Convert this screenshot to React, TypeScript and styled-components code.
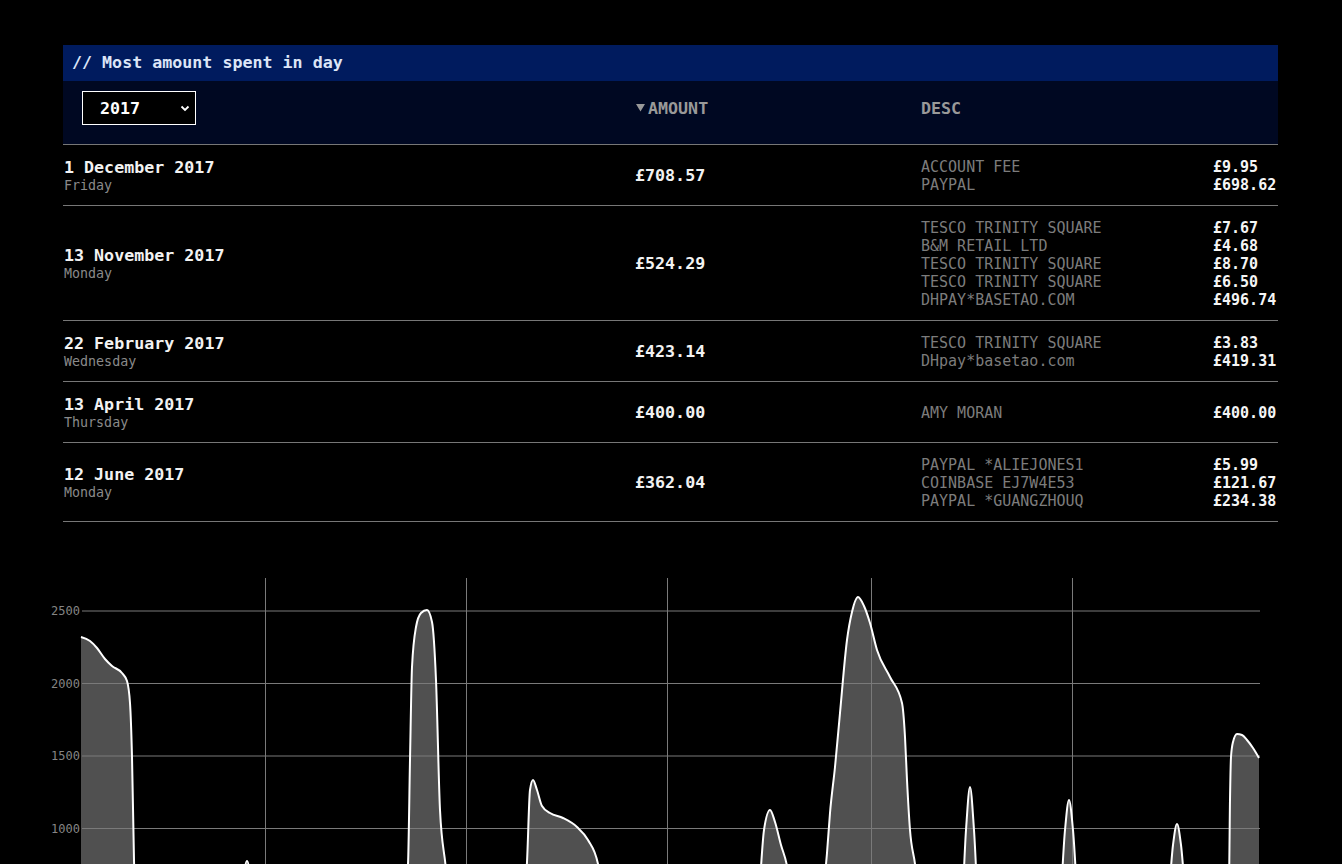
import React from "react";
import styled, { createGlobalStyle } from "styled-components";

const Global = createGlobalStyle`
  html, body { margin: 0; padding: 0; background: #000; }
  body { font-family: "DejaVu Sans Mono", "Liberation Mono", monospace; color: #fff; }
`;

const Page = styled.div`
  padding-top: 45px;
  display: flex;
  flex-direction: column;
`;

const Panel = styled.section`
  margin-left: 63px;
  width: 1215px;
  display: flex;
  flex-direction: column;
`;

const TitleBar = styled.div`
  height: 36px;
  background: #001b5e;
  color: #dce5f7;
  font-weight: bold;
  font-size: 16.67px;
  line-height: 36px;
  padding-left: 9px;
`;

const Grid = styled.div`
  display: grid;
  grid-template-columns: 571px 286px 1fr;
`;

const HeaderRow = styled(Grid)`
  background: #000822;
  padding: 10px 0 19px;
  border-bottom: 1px solid #777;
  align-items: center;
`;

const HeaderCell = styled.div<{ $pl?: number }>`
  padding-left: ${(p) => p.$pl ?? 1}px;
  color: #999;
  font-weight: bold;
  font-size: 16.67px;
  display: flex;
  align-items: center;
`;

const SelectWrap = styled.div`
  position: relative;
  width: 114px;
  height: 34px;
`;

const YearSelect = styled.select`
  appearance: none;
  -webkit-appearance: none;
  width: 114px;
  height: 34px;
  box-sizing: border-box;
  background: #000;
  color: #fff;
  border: 1px solid #fff;
  border-radius: 0;
  font-family: "DejaVu Sans Mono", monospace;
  font-weight: bold;
  font-size: 16.67px;
  padding: 0 0 0 17px;
  outline: none;
`;

const Chevron = styled.svg`
  position: absolute;
  right: 6px;
  top: 14px;
  pointer-events: none;
`;

const SortIcon = styled.svg`
  margin-right: 3px;
  margin-left: 1px;
`;

const Row = styled(Grid)`
  border-bottom: 1px solid #777;
  padding: 12px 0;
  align-items: center;
`;

const DateCell = styled.div`
  padding-left: 1px;
  display: flex;
  flex-direction: column;
`;

const DateText = styled.div`
  font-weight: bold;
  font-size: 16.67px;
  line-height: 21px;
  color: #f2f2f2;
`;

const DayText = styled.div`
  font-size: 13.33px;
  line-height: 15px;
  color: #8a8a8a;
`;

const AmountCell = styled.div`
  padding-left: 1px;
  font-weight: bold;
  font-size: 16.67px;
  color: #f2f2f2;
`;

const DescCell = styled.div`
  padding: 1px 2px 0 1px;
  margin-bottom: -1px;
  display: flex;
  flex-direction: column;
`;

const DescLine = styled.div`
  display: grid;
  grid-template-columns: 292px 1fr;
  font-size: 15px;
  line-height: 18px;
`;

const DescName = styled.span`
  color: #7c7c7c;
`;

const DescAmount = styled.span`
  color: #f5f5f5;
  font-weight: bold;
`;

const ChartBox = styled.div`
  margin-top: 48px;
  height: 294px;
  overflow: hidden;
`;

type Tx = [string, string];
type Day = { date: string; day: string; amount: string; items: Tx[] };

const data: Day[] = [
  { date: "1 December 2017", day: "Friday", amount: "£708.57", items: [["ACCOUNT FEE", "£9.95"], ["PAYPAL", "£698.62"]] },
  {
    date: "13 November 2017",
    day: "Monday",
    amount: "£524.29",
    items: [
      ["TESCO TRINITY SQUARE", "£7.67"],
      ["B&M RETAIL LTD", "£4.68"],
      ["TESCO TRINITY SQUARE", "£8.70"],
      ["TESCO TRINITY SQUARE", "£6.50"],
      ["DHPAY*BASETAO.COM", "£496.74"],
    ],
  },
  { date: "22 February 2017", day: "Wednesday", amount: "£423.14", items: [["TESCO TRINITY SQUARE", "£3.83"], ["DHpay*basetao.com", "£419.31"]] },
  { date: "13 April 2017", day: "Thursday", amount: "£400.00", items: [["AMY MORAN", "£400.00"]] },
  {
    date: "12 June 2017",
    day: "Monday",
    amount: "£362.04",
    items: [
      ["PAYPAL *ALIEJONES1", "£5.99"],
      ["COINBASE EJ7W4E53", "£121.67"],
      ["PAYPAL *GUANGZHOUQ", "£234.38"],
    ],
  },
];

const pts: [number, number][] = [
  [81, 637], [90, 641], [97, 648], [105, 659], [112, 666], [122, 673], [127, 681], [130, 703], [132, 757], [134, 860], [138, 950],
  [200, 950], [240, 900], [247, 861], [254, 900], [300, 955],
  [380, 955], [404, 900], [408, 864], [410, 760], [412, 667], [416, 627], [421, 613], [427, 610], [432, 622], [436, 680], [440, 810], [446, 870], [452, 950],
  [510, 955], [524, 900], [527, 862], [530, 790], [533, 780], [537, 790], [542, 806], [550, 813], [563, 818], [577, 827], [588, 840], [598, 864], [606, 920], [640, 955],
  [730, 955], [758, 900], [764, 830], [770, 810], [775, 822], [781, 845], [787, 866], [795, 930], [808, 950],
  [822, 900], [827, 853], [830, 813], [835, 767], [840, 713], [847, 640], [852, 612], [858, 597], [864, 606], [870, 623], [877, 650], [890, 677], [902, 703], [905, 737], [907, 780], [910, 830], [915, 864], [922, 930],
  [945, 955], [962, 900], [966, 830], [970, 787], [974, 830], [978, 900], [990, 955],
  [1040, 955], [1060, 900], [1065, 830], [1069, 800], [1073, 830], [1078, 900], [1095, 955],
  [1150, 955], [1168, 900], [1173, 845], [1177, 824], [1181, 845], [1186, 900], [1200, 955],
  [1222, 940], [1229, 880], [1230, 800], [1231, 757], [1233, 742], [1237, 734], [1242, 735], [1247, 740], [1253, 748], [1259, 758],
];

function monotonePath(p: [number, number][]): string {
  const n = p.length;
  const t: number[] = new Array(n).fill(0);
  const sign = (v: number) => (v < 0 ? -1 : 1);
  for (let i = 1; i < n - 1; i++) {
    const h0 = p[i][0] - p[i - 1][0];
    const h1 = p[i + 1][0] - p[i][0];
    const s0 = (p[i][1] - p[i - 1][1]) / h0;
    const s1 = (p[i + 1][1] - p[i][1]) / h1;
    const pp = (s0 * h1 + s1 * h0) / (h0 + h1);
    t[i] = (sign(s0) + sign(s1)) * Math.min(Math.abs(s0), Math.abs(s1), 0.5 * Math.abs(pp)) || 0;
  }
  const hA = p[1][0] - p[0][0];
  t[0] = (3 * (p[1][1] - p[0][1]) / hA - t[1]) / 2;
  const hB = p[n - 1][0] - p[n - 2][0];
  t[n - 1] = (3 * (p[n - 1][1] - p[n - 2][1]) / hB - t[n - 2]) / 2;
  let d = `M${p[0][0]},${p[0][1]}`;
  for (let i = 0; i < n - 1; i++) {
    const dx = (p[i + 1][0] - p[i][0]) / 3;
    d += ` C${p[i][0] + dx},${p[i][1] + dx * t[i]} ${p[i + 1][0] - dx},${p[i + 1][1] - dx * t[i + 1]} ${p[i + 1][0]},${p[i + 1][1]}`;
  }
  return d;
}

const line = monotonePath(pts);
const area = `${line} L1259,974 L81,974 Z`;
const yTicks: [string, number][] = [["2500", 611], ["2000", 683.5], ["1500", 756], ["1000", 828.5]];
const xTicks = [265.5, 466.5, 667.5, 871.5, 1072.5];

const Chart = () => (
  <ChartBox>
    <svg width="1342" height="294" viewBox="0 570 1342 294">
      <path d={area} fill="#505050" />
      {yTicks.map(([l, y]) => (
        <g key={l}>
          <line x1={82} x2={1260} y1={y} y2={y} stroke="#7a7a7a" strokeWidth={1} />
          <text x={80} y={y + 4} textAnchor="end" fill="#858585" fontSize="12" fontFamily="DejaVu Sans Mono, monospace">
            {l}
          </text>
        </g>
      ))}
      {xTicks.map((x) => (
        <line key={x} x1={x} x2={x} y1={578} y2={980} stroke="#7a7a7a" strokeWidth={1} />
      ))}
      <path d={line} fill="none" stroke="#fff" strokeWidth={2} strokeLinejoin="round" />
    </svg>
  </ChartBox>
);

export default function App() {
  return (
    <Page>
      <Global />
      <Panel>
        <TitleBar>// Most amount spent in day</TitleBar>
        <HeaderRow>
          <HeaderCell $pl={19}>
            <SelectWrap>
              <YearSelect defaultValue="2017">
                <option value="2017">2017</option>
                <option value="2016">2016</option>
              </YearSelect>
              <Chevron width="10" height="7" viewBox="0 0 10 7">
                <path d="M1.5 1.5 L5 5 L8.5 1.5" fill="none" stroke="#fff" strokeWidth="1.8" />
              </Chevron>
            </SelectWrap>
          </HeaderCell>
          <HeaderCell>
            <SortIcon width="9" height="8" viewBox="0 0 9 8">
              <path d="M0 0 H9 L4.5 7.5 Z" fill="#999" />
            </SortIcon>
            AMOUNT
          </HeaderCell>
          <HeaderCell>DESC</HeaderCell>
        </HeaderRow>
        {data.map((r) => (
          <Row key={r.date}>
            <DateCell>
              <DateText>{r.date}</DateText>
              <DayText>{r.day}</DayText>
            </DateCell>
            <AmountCell>{r.amount}</AmountCell>
            <DescCell>
              {r.items.map(([n, a], i) => (
                <DescLine key={i}>
                  <DescName>{n}</DescName>
                  <DescAmount>{a}</DescAmount>
                </DescLine>
              ))}
            </DescCell>
          </Row>
        ))}
      </Panel>
      <Chart />
    </Page>
  );
}
